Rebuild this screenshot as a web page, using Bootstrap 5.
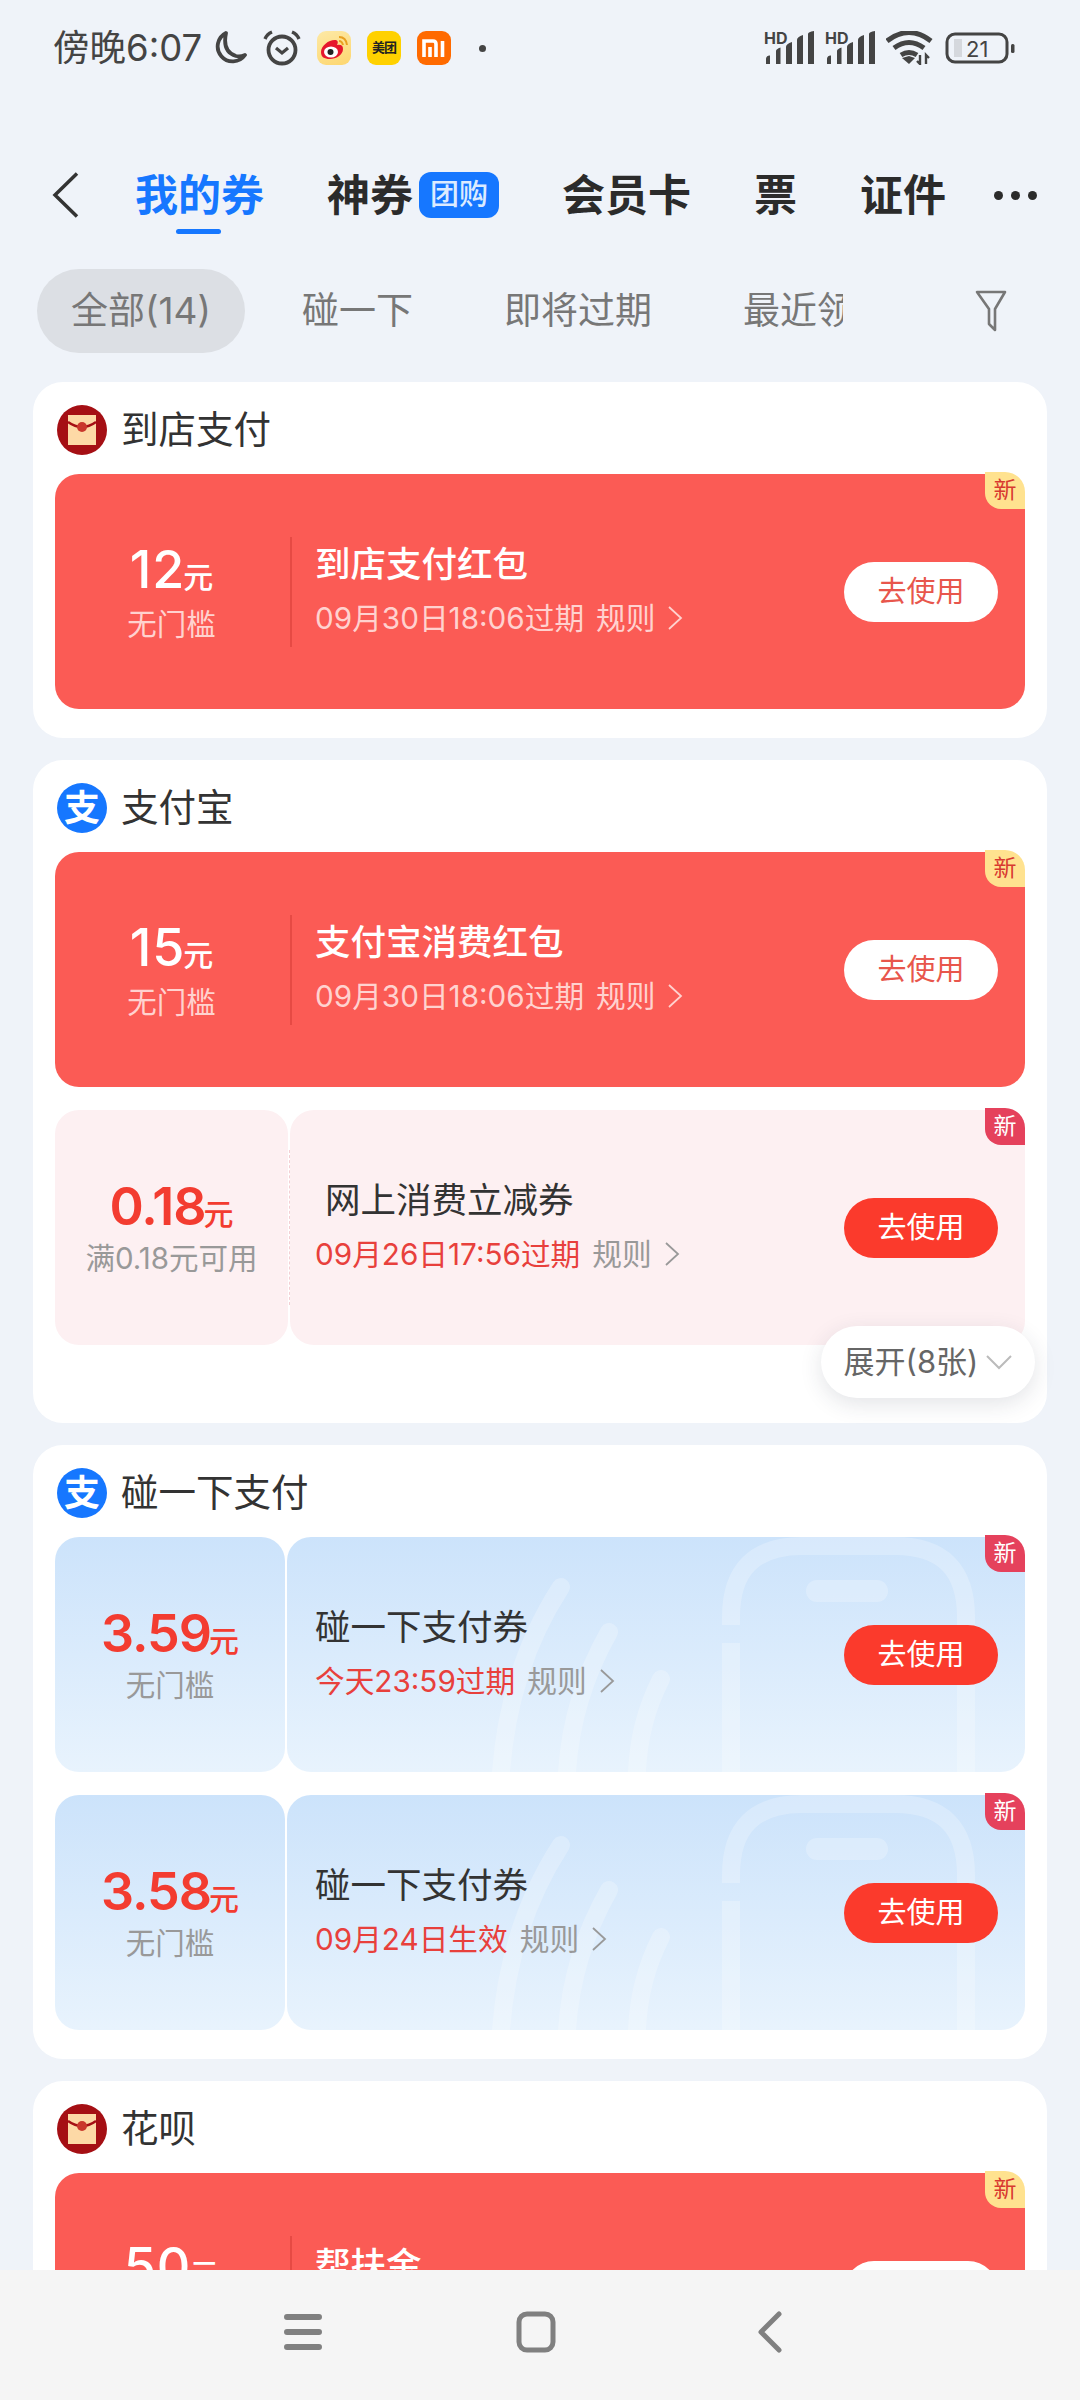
<!DOCTYPE html>
<html lang="zh-CN">
<head>
  <meta charset="UTF-8">
  <meta name="viewport" content="width=device-width, initial-scale=1.0">
  <title>我的券</title>
  <link href="https://cdn.jsdelivr.net/npm/bootstrap@5.3.0/dist/css/bootstrap.min.css" rel="stylesheet">
  <style>
    html, body { height: 2400px; }
    body {
      background-color: #eff3f9;
      font-family: Inter, "Noto Sans CJK SC", sans-serif;
      overflow: hidden;
      color: #333;
    }
    /* status bar */
    .sbar { height: 96px; padding: 0 65px 0 53px; color: #444; }
    .sbar-time { font-size: 36.5px; line-height: 1; white-space: nowrap; }
    .sbar-left { gap: 16px; }
    .sbar-time + svg { margin-left: -7px; }
    .app-ico { width: 34px; height: 34px; border-radius: 9px; }
    .app-weibo { background: linear-gradient(160deg, #fde9a6, #fdd66f); }
    .app-meituan { background: #ffd100; color: #222; font-size: 13px; font-weight: 700; letter-spacing: -1px; }
    .app-mi { background: #ff6a00; }
    .sbar-dot { width: 7px; height: 7px; background: #444; margin-left: 12px; }
    .sbar-right { gap: 11px; }
    .sig-ico { overflow: visible; }
    /* tabs */
    .top-tabs { height: 90px; margin-top: 54px; padding-left: 52px; gap: 63px; font-size: 43px; font-weight: 700; color: #2b2b2b; }
    .top-tabs .tab-back { margin-right: -8px; }
    .tab-on { color: #1677ff; }
    .tab-on::after { content: ""; position: absolute; left: 41px; bottom: 6px; width: 45px; height: 5px; border-radius: 3px; background: #1677ff; }
    .tab-item { line-height: 90px; }
    .tab-tag { background: #1677ff; color: #dcebff; font-size: 29px; font-weight: 500; width: 80px; height: 46px; border-radius: 12px; margin-left: 6px; }
    .tab-more { gap: 8px; margin-left: -15px; }
    .tab-more i { width: 9px; height: 9px; background: #2b2b2b; }
    /* filter pills */
    .filter-row { margin: 29px 0 29px 37px; height: 84px; }
    .filter-scroll { width: 806px; gap: 23px; overflow: hidden; font-size: 37px; color: #777; }
    .filter-item { padding: 0 34px; line-height: 84px; white-space: nowrap; }
    .filter-on { background: #dcdfe4; }
    .filter-ico { margin-left: 132px; }
    /* sections */
    .sect-list { padding: 0 33px; gap: 22px; }
    .sect { border-radius: 30px; padding: 0 22px 29px; }
    .sect-head { height: 92px; padding: 4px 0 0 2px; gap: 14px; font-size: 37.5px; }
    .sect-ico { width: 50px; height: 50px; }
    .alipay-ico { background: #1677ff; color: #fff; font-size: 36px; font-weight: 700; line-height: 1; }
    .sect-bottom-wide { padding-bottom: 78px; }
    /* coupons */
    .cpn { height: 235px; border-radius: 24px; }
    .cpn + .cpn { margin-top: 23px; }
    .cpn-left { width: 233px; flex: none; border-radius: 24px; }
    .cpn-main { border-radius: 24px; padding: 0 27px; min-width: 0; }
    .cpn-amt { font-size: 52px; font-weight: 500; line-height: 60px; letter-spacing: -1px; }
    .cpn-amt small { font-size: 30px; font-weight: 500; letter-spacing: 0; margin-left: -2px; }
    .cpn-sub { font-size: 29.5px; line-height: 40px; margin-top: -3px; white-space: nowrap; }
    .cpn-text { padding-bottom: 4px; }
    .cpn-title { font-size: 35.5px; font-weight: 500; line-height: 46px; }
    .cpn-date { font-size: 29.7px; line-height: 40px; margin-top: 10px; gap: 12px; white-space: nowrap; }
    .cpn-btn { width: 154px; height: 60px; padding: 0; font-size: 29px; line-height: 58px; border: 0; }
    .cpn-new { width: 40px; height: 37px; font-size: 23px; line-height: 36px; border-radius: 0 20px 0 16px; top: -2px; right: 0; text-align: center; }
    .cpn-art { left: 0; top: 0; width: 100%; height: 100%; }

    .cpn-red { background: #fb5b55; color: #fff; }
    .cpn-red .cpn-amt { letter-spacing: 1px; }
    .cpn-red .cpn-sub, .cpn-red .cpn-date { color: #ffd2cf; }
    .cpn-red .cpn-main::before { content: ""; position: absolute; left: 2px; top: 63px; height: 110px; width: 2px; background: #e64a44; }
    .cpn-red .cpn-btn { background: #fff; color: #e8564c; }
    .cpn-red .cpn-new { background: #ffe28f; color: #d8392f; }

    .cpn-pale .cpn-amt { color: #f33c30; font-weight: 600; }
    .cpn-pale .cpn-sub { margin-top: -6px; }
    .cpn-pale .cpn-sub, .cpn-pale .cpn-rule { color: #999; }
    .cpn-pale .cpn-title { font-weight: 400; color: #333; }
    .cpn-pale .cpn-when { color: #e8403c; }
    .cpn-pale .cpn-btn { background: #fb3a2c; color: #fff; }
    .cpn-pale .cpn-new { background: #e5415c; color: #fff; }

    .cpn-pink .cpn-left, .cpn-pink .cpn-main { background: #fdf0f2; }
    .cpn-pink .cpn-main { margin-left: 2px; padding-left: 25px; }
    .cpn-pink .cpn-title { margin-left: 10px; }
    .cpn-pink .cpn-main::before { content: ""; position: absolute; left: -1px; top: 40px; height: 155px; border-left: 1px dashed #f3cfd4; }

    .cpn-blue .cpn-left, .cpn-blue .cpn-main { background: linear-gradient(180deg, #cce3fb 0%, #e8f3fd 100%); }
    .cpn-blue .cpn-left { width: 230px; }
    .cpn-blue .cpn-main { margin-left: 2px; padding-left: 28px; }
    .cpn-blue .cpn-text, .cpn-blue .cpn-btn { position: relative; }

    .cpn-cut .cpn-left { justify-content: flex-start !important; padding-top: 64px; }
    .cpn-cut .cpn-main { padding-top: 70px; align-items: flex-start !important; }
    .cpn-cut .cpn-btn { margin-top: 18px; }

    .more-pill { right: 12px; bottom: 25px; width: 214px; height: 72px; background: #fff; box-shadow: 0 6px 22px rgba(40, 50, 70, .13); color: #666; font-size: 31px; gap: 8px; }
    /* system nav */
    .sys-nav { height: 130px; background: #f5f5f5; padding: 0 14px 6px 0; gap: 194px; }
    .sys-nav svg:last-child { margin-left: 7px; }
  </style>
</head>
<body>

<svg width="0" height="0" class="position-absolute">
  <symbol id="ico-bars" viewBox="0 0 50 34">
    <path d="M2 28a3.500 3.500 0 0 1 4-3.500V33H2zM12 33V20q0-2 4.500-3.500V33zM22 33V16q0-3 6-5v22zM33 33V9q0-3 6-5v29zM44 33V3q0-2 6-3v33z" fill="#444"/>
  </symbol>
  <symbol id="ico-chev" viewBox="0 0 16 26">
    <path d="M2 2l12 11L2 24" fill="none" stroke="currentColor" stroke-width="1.8"/>
  </symbol>
  <symbol id="ico-packet" viewBox="0 0 50 50">
    <circle cx="25" cy="25" r="25" fill="#a50f14"/>
    <rect x="11" y="10" width="28" height="30" fill="#fdd9a6"/>
    <path d="M11 17q14 10 28 0" fill="none" stroke="#a50f14" stroke-width="2.400"/>
    <circle cx="25" cy="22" r="5" fill="#c9372c"/>
  </symbol>
  <symbol id="ico-nfc-art" viewBox="0 0 738 235" preserveAspectRatio="none">
    <g fill="none" stroke="#fff" stroke-opacity=".24" stroke-width="18">
      <path d="M444 235V106M444 88V80Q444 9 515 9H608Q679 9 679 80V235"/>
      <path d="M274 50Q222 130 214 235M322 95Q285 160 280 235M374 142Q352 185 350 235" stroke-linecap="round"/>
      <path d="M530 54H590" stroke-width="22" stroke-linecap="round"/>
    </g>
  </symbol>
</svg>

<div class="sbar d-flex align-items-center justify-content-between">
  <div class="sbar-left d-flex align-items-center">
    <span class="sbar-time">傍晚6:07</span>
    <svg width="36" height="36" viewBox="0 0 36 36"><path d="M15 3a15 15 0 1 0 19 22q-5 2-9 1Q11 22 15 3z" fill="none" stroke="#444" stroke-width="3.800" stroke-linejoin="round"/></svg>
    <svg width="38" height="36" viewBox="0 0 38 36"><circle cx="19" cy="20" r="13.500" fill="none" stroke="#444" stroke-width="3.800"/><path d="M13 18l6 5 6-5" fill="none" stroke="#444" stroke-width="3.200"/><path d="M2 9q2-5 7-7M36 9q-2-5-7-7" fill="none" stroke="#444" stroke-width="3.400"/></svg>
    <span class="app-ico app-weibo d-flex align-items-center justify-content-center">
      <svg width="30" height="28" viewBox="0 0 30 28"><path d="M2 18C2 11 11 5 17 6q3 1 1 5 6-1 6 4c0 6-7 10-13 10S2 23 2 18z" fill="#e6162d"/><ellipse cx="12" cy="18" rx="7" ry="5.500" fill="#fff"/><circle cx="11.500" cy="18" r="3" fill="#222"/><path d="M20 3q7 0 8 8M20 7q3 0 4 4" fill="none" stroke="#e9a020" stroke-width="2"/></svg>
    </span>
    <span class="app-ico app-meituan d-flex align-items-center justify-content-center">美团</span>
    <span class="app-ico app-mi d-flex align-items-center justify-content-center">
      <svg width="24" height="18" viewBox="0 0 24 18"><path d="M2 18V2h9q3 0 3 3v13M8 18V8" fill="none" stroke="#fff" stroke-width="3.600"/><path d="M20.500 2v16" stroke="#fff" stroke-width="3.600"/></svg>
    </span>
    <span class="sbar-dot rounded-circle"></span>
  </div>
  <div class="sbar-right d-flex align-items-center">
    <svg class="sig-ico" width="50" height="34" viewBox="0 0 50 34"><use href="#ico-bars"/><text x="0" y="13" font-family="Inter, sans-serif" font-size="16" font-weight="700" fill="#444">HD</text></svg>
    <svg class="sig-ico" width="50" height="34" viewBox="0 0 50 34"><use href="#ico-bars"/><text x="0" y="13" font-family="Inter, sans-serif" font-size="16" font-weight="700" fill="#444">HD</text></svg>
    <svg width="48" height="34" viewBox="0 0 48 34">
      <path d="M1 10q22-17 44 0M8 17q15-11 30 0M15 24q8-5 16 0" fill="none" stroke="#444" stroke-width="5"/>
      <path d="M16 27l7-2 6 2-6 6z" fill="#444"/>
      <path d="M34 24v9l-3-3M40 33v-9l3 3" fill="none" stroke="#444" stroke-width="2.400"/>
    </svg>
    <svg width="70" height="32" viewBox="0 0 70 32">
      <rect x="2" y="2" width="60" height="28" rx="8" fill="none" stroke="#444" stroke-width="3"/>
      <rect x="9" y="7" width="8" height="18" fill="#d5d8dd"/>
      <text x="21" y="24.500" font-family="Inter, sans-serif" font-size="22" fill="#444">21</text>
      <rect x="66" y="12" width="3.500" height="9" rx="1.500" fill="#444"/>
    </svg>
  </div>
</div>

<div class="top-tabs d-flex align-items-center">
  <svg class="tab-back" width="28" height="46" viewBox="0 0 28 46"><path d="M25 1.500L3 23l22 21.500" fill="none" stroke="#333" stroke-width="3.500"/></svg>
  <span class="tab-item tab-on position-relative">我的券</span>
  <span class="tab-item d-flex align-items-center">神券<span class="tab-tag d-flex align-items-center justify-content-center">团购</span></span>
  <span class="tab-item">会员卡</span>
  <span class="tab-item">票</span>
  <span class="tab-item">证件</span>
  <span class="tab-more d-flex"><i class="rounded-circle"></i><i class="rounded-circle"></i><i class="rounded-circle"></i></span>
</div>

<div class="filter-row d-flex align-items-center">
  <div class="filter-scroll d-flex">
    <span class="filter-item filter-on rounded-pill">全部(14)</span>
    <span class="filter-item">碰一下</span>
    <span class="filter-item">即将过期</span>
    <span class="filter-item">最近领取</span>
  </div>
  <svg class="filter-ico" width="32" height="42" viewBox="0 0 32 42"><path d="M2 2h28L20 19v21l-6-6V19z" fill="none" stroke="#777" stroke-width="2.600" stroke-linejoin="round"/></svg>
</div>

<div class="sect-list d-flex flex-column">

  <section class="sect bg-white">
    <div class="sect-head d-flex align-items-center">
      <svg class="sect-ico"><use href="#ico-packet"/></svg>
      <span>到店支付</span>
    </div>
    <div class="cpn cpn-red d-flex position-relative">
      <div class="cpn-left d-flex flex-column align-items-center justify-content-center">
        <div class="cpn-amt">12<small>元</small></div>
        <div class="cpn-sub">无门槛</div>
      </div>
      <div class="cpn-main flex-fill d-flex align-items-center justify-content-between position-relative">
        <div class="cpn-text">
          <div class="cpn-title">到店支付红包</div>
          <div class="cpn-date d-flex align-items-center"><span class="cpn-when">09月30日18:06过期</span><span class="cpn-rule">规则</span><svg width="16" height="26"><use href="#ico-chev"/></svg></div>
        </div>
        <button class="btn cpn-btn rounded-pill">去使用</button>
      </div>
      <span class="cpn-new position-absolute">新</span>
    </div>
  </section>

  <section class="sect sect-bottom-wide bg-white position-relative">
    <div class="sect-head d-flex align-items-center">
      <span class="sect-ico alipay-ico rounded-circle d-flex align-items-center justify-content-center">支</span>
      <span>支付宝</span>
    </div>
    <div class="cpn cpn-red d-flex position-relative">
      <div class="cpn-left d-flex flex-column align-items-center justify-content-center">
        <div class="cpn-amt">15<small>元</small></div>
        <div class="cpn-sub">无门槛</div>
      </div>
      <div class="cpn-main flex-fill d-flex align-items-center justify-content-between position-relative">
        <div class="cpn-text">
          <div class="cpn-title">支付宝消费红包</div>
          <div class="cpn-date d-flex align-items-center"><span class="cpn-when">09月30日18:06过期</span><span class="cpn-rule">规则</span><svg width="16" height="26"><use href="#ico-chev"/></svg></div>
        </div>
        <button class="btn cpn-btn rounded-pill">去使用</button>
      </div>
      <span class="cpn-new position-absolute">新</span>
    </div>
    <div class="cpn cpn-pale cpn-pink d-flex position-relative">
      <div class="cpn-left d-flex flex-column align-items-center justify-content-center">
        <div class="cpn-amt">0.18<small>元</small></div>
        <div class="cpn-sub">满0.18元可用</div>
      </div>
      <div class="cpn-main flex-fill d-flex align-items-center justify-content-between position-relative">
        <div class="cpn-text">
          <div class="cpn-title">网上消费立减券</div>
          <div class="cpn-date d-flex align-items-center"><span class="cpn-when">09月26日17:56过期</span><span class="cpn-rule">规则</span><svg class="cpn-rule" width="16" height="26"><use href="#ico-chev"/></svg></div>
        </div>
        <button class="btn cpn-btn rounded-pill">去使用</button>
      </div>
      <span class="cpn-new position-absolute">新</span>
    </div>
    <div class="more-pill position-absolute rounded-pill d-flex align-items-center justify-content-center">
      <span>展开(8张)</span>
      <svg width="26" height="16" viewBox="0 0 26 16"><path d="M1 2l12 12L25 2" fill="none" stroke="#bbb" stroke-width="2"/></svg>
    </div>
  </section>

  <section class="sect bg-white">
    <div class="sect-head d-flex align-items-center">
      <span class="sect-ico alipay-ico rounded-circle d-flex align-items-center justify-content-center">支</span>
      <span>碰一下支付</span>
    </div>
    <div class="cpn cpn-pale cpn-blue d-flex position-relative">
      <div class="cpn-left d-flex flex-column align-items-center justify-content-center">
        <div class="cpn-amt">3.59<small>元</small></div>
        <div class="cpn-sub">无门槛</div>
      </div>
      <div class="cpn-main flex-fill d-flex align-items-center justify-content-between position-relative">
        <svg class="cpn-art position-absolute"><use href="#ico-nfc-art"/></svg>
        <div class="cpn-text">
          <div class="cpn-title">碰一下支付券</div>
          <div class="cpn-date d-flex align-items-center"><span class="cpn-when">今天23:59过期</span><span class="cpn-rule">规则</span><svg class="cpn-rule" width="16" height="26"><use href="#ico-chev"/></svg></div>
        </div>
        <button class="btn cpn-btn rounded-pill">去使用</button>
      </div>
      <span class="cpn-new position-absolute">新</span>
    </div>
    <div class="cpn cpn-pale cpn-blue d-flex position-relative">
      <div class="cpn-left d-flex flex-column align-items-center justify-content-center">
        <div class="cpn-amt">3.58<small>元</small></div>
        <div class="cpn-sub">无门槛</div>
      </div>
      <div class="cpn-main flex-fill d-flex align-items-center justify-content-between position-relative">
        <svg class="cpn-art position-absolute"><use href="#ico-nfc-art"/></svg>
        <div class="cpn-text">
          <div class="cpn-title">碰一下支付券</div>
          <div class="cpn-date d-flex align-items-center"><span class="cpn-when">09月24日生效</span><span class="cpn-rule">规则</span><svg class="cpn-rule" width="16" height="26"><use href="#ico-chev"/></svg></div>
        </div>
        <button class="btn cpn-btn rounded-pill">去使用</button>
      </div>
      <span class="cpn-new position-absolute">新</span>
    </div>
  </section>

  <section class="sect bg-white">
    <div class="sect-head d-flex align-items-center">
      <svg class="sect-ico"><use href="#ico-packet"/></svg>
      <span>花呗</span>
    </div>
    <div class="cpn cpn-red cpn-cut d-flex position-relative">
      <div class="cpn-left d-flex flex-column align-items-center">
        <div class="cpn-amt">50<small>元</small></div>
      </div>
      <div class="cpn-main flex-fill d-flex justify-content-between position-relative">
        <div class="cpn-text">
          <div class="cpn-title">帮扶金</div>
        </div>
        <button class="btn cpn-btn rounded-pill">去使用</button>
      </div>
      <span class="cpn-new position-absolute">新</span>
    </div>
  </section>

</div>

<div class="sys-nav fixed-bottom d-flex align-items-center justify-content-center">
  <svg width="38" height="38" viewBox="0 0 38 38"><path d="M3 4h32M3 19h32M3 34h32" stroke="#808080" stroke-width="6" stroke-linecap="round"/></svg>
  <svg width="40" height="42" viewBox="0 0 40 42"><rect x="3" y="3" width="34" height="36" rx="8" fill="none" stroke="#808080" stroke-width="5"/></svg>
  <svg width="25" height="42" viewBox="0 0 25 42"><path d="M22 3L4 21l18 18" fill="none" stroke="#808080" stroke-width="5" stroke-linecap="round" stroke-linejoin="round"/></svg>
</div>

<script src="https://cdn.jsdelivr.net/npm/bootstrap@5.3.0/dist/js/bootstrap.bundle.min.js"></script>
</body>
</html>
